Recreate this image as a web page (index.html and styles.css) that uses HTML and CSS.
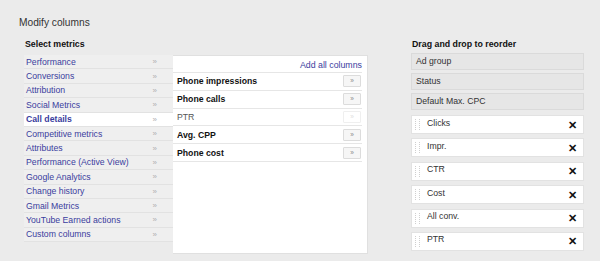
FILE: index.html
```html
<!DOCTYPE html>
<html lang="en">
<head>
    <meta charset="UTF-8">
    <meta name="viewport" content="width=device-width, initial-scale=1.0">
    <title>Modify columns</title>
    <link rel="stylesheet" href="styles.css">
</head>
<body>
    <div class="page">
        <h1>Modify columns</h1>
        <div class="columns">
            <div class="metrics">
                <h2>Select metrics</h2>
                <ul class="metric-list">
                    <li><a href="#">Performance</a><span class="arrow">&raquo;</span></li>
                    <li><a href="#">Conversions</a><span class="arrow">&raquo;</span></li>
                    <li><a href="#">Attribution</a><span class="arrow">&raquo;</span></li>
                    <li><a href="#">Social Metrics</a><span class="arrow">&raquo;</span></li>
                    <li class="active"><a href="#">Call details</a><span class="arrow">&raquo;</span></li>
                    <li><a href="#">Competitive metrics</a><span class="arrow">&raquo;</span></li>
                    <li><a href="#">Attributes</a><span class="arrow">&raquo;</span></li>
                    <li><a href="#">Performance (Active View)</a><span class="arrow">&raquo;</span></li>
                    <li><a href="#">Google Analytics</a><span class="arrow">&raquo;</span></li>
                    <li><a href="#">Change history</a><span class="arrow">&raquo;</span></li>
                    <li><a href="#">Gmail Metrics</a><span class="arrow">&raquo;</span></li>
                    <li><a href="#">YouTube Earned actions</a><span class="arrow">&raquo;</span></li>
                    <li><a href="#">Custom columns</a><span class="arrow">&raquo;</span></li>
                </ul>
            </div>

            <div class="panel">
                <div class="panel-head"><a href="#">Add all columns</a></div>
                <ul class="field-list">
                    <li><span>Phone impressions</span><button>&raquo;</button></li>
                    <li><span>Phone calls</span><button>&raquo;</button></li>
                    <li class="added"><span>PTR</span><button disabled>&raquo;</button></li>
                    <li><span>Avg. CPP</span><button>&raquo;</button></li>
                    <li><span>Phone cost</span><button>&raquo;</button></li>
                </ul>
            </div>

            <div class="order">
                <h2>Drag and drop to reorder</h2>
                <ul class="fixed-list">
                    <li>Ad group</li>
                    <li>Status</li>
                    <li>Default Max. CPC</li>
                </ul>
                <ul class="drag-list">
                    <li><span class="grip"></span><span class="name">Clicks</span><span class="remove">&#x2715;</span></li>
                    <li><span class="grip"></span><span class="name">Impr.</span><span class="remove">&#x2715;</span></li>
                    <li><span class="grip"></span><span class="name">CTR</span><span class="remove">&#x2715;</span></li>
                    <li><span class="grip"></span><span class="name">Cost</span><span class="remove">&#x2715;</span></li>
                    <li><span class="grip"></span><span class="name">All conv.</span><span class="remove">&#x2715;</span></li>
                    <li><span class="grip"></span><span class="name">PTR</span><span class="remove">&#x2715;</span></li>
                </ul>
            </div>
        </div>
    </div>
</body>
</html>
```

FILE: styles.css
```css
body {
    margin: 0;
    background-color: #ebebeb;
    font-family: "Liberation Sans", Arial, sans-serif;
    color: #222;
}
ul {
    list-style: none;
    margin: 0;
    padding: 0;
}
a {
    color: #3a3d9e;
    text-decoration: none;
}
.page {
    padding: 17px 0 0 19px;
}
h1 {
    margin: 0;
    font-size: 10.2px;
    line-height: 12px;
    font-weight: normal;
    color: #333;
}
.columns {
    display: flex;
    margin-top: 8.5px;
    margin-left: 5px;
}
h2 {
    margin: 0;
    font-size: 8.8px;
    line-height: 12px;
    font-weight: bold;
    color: #111;
}

/* left: metric groups */
.metrics {
    width: 149px;
}
.metrics h2 {
    padding-left: 1px;
}
.metric-list {
    margin-top: 5.5px;
}
.metric-list li {
    display: flex;
    justify-content: space-between;
    align-items: center;
    height: 13.4px;
    padding: 0 16px 0 2px;
    background-color: #efefef;
    border-bottom: 1px solid #e2e2e2;
    font-size: 8.7px;
}
.metric-list li.active {
    background-color: #fff;
}
.metric-list li.active a {
    font-weight: bold;
}
.arrow {
    color: #b0b0b0;
    font-size: 8px;
}

/* middle: fields of a group */
.panel {
    width: 194px;
    height: 197px;
    margin-top: 17.5px;
    background-color: #fff;
    border: 1px solid #e0e0e0;
    border-left: none;
}
.panel-head {
    height: 16px;
    padding-right: 5px;
    text-align: right;
    font-size: 8.8px;
    line-height: 19px;
}
.field-list {
    margin-right: 5px;
    border-top: 1px solid #e6e6e6;
}
.field-list li {
    display: flex;
    justify-content: space-between;
    align-items: center;
    height: 16.8px;
    padding: 0 1px 0 4px;
    border-bottom: 1px solid #e6e6e6;
    font-size: 8.7px;
    font-weight: bold;
    color: #111;
}
.field-list li.added {
    font-weight: normal;
    color: #555;
}
.field-list button {
    width: 18px;
    height: 12px;
    padding: 0;
    border: 1px solid #dcdcdc;
    border-radius: 1px;
    background-color: #f6f6f6;
    color: #888;
    font-size: 6.5px;
    line-height: 10px;
    font-family: inherit;
}
.field-list button:disabled {
    border-color: #efefef;
    background-color: #fff;
    color: #ddd;
}

/* right: chosen columns */
.order {
    width: 173px;
    margin-left: 43px;
}
.order h2 {
    padding-left: 1px;
}
.fixed-list {
    margin-top: 3.5px;
}
.fixed-list li {
    height: 15px;
    margin-bottom: 3px;
    padding-left: 4px;
    background-color: #e6e6e6;
    border: 1px solid #dadada;
    font-size: 8.7px;
    line-height: 15px;
    color: #333;
}
.drag-list {
    margin-top: 5px;
}
.drag-list li {
    display: flex;
    align-items: center;
    height: 17px;
    margin-bottom: 4.4px;
    padding: 0 6px 0 3px;
    background-color: #fff;
    border: 1px solid #e2e2e2;
    font-size: 8.7px;
    color: #333;
}
.grip {
    width: 3px;
    height: 11px;
    margin-right: 7px;
    border-left: 1px dotted #cfcfcf;
    border-right: 1px dotted #cfcfcf;
}
.name {
    flex: 1;
    margin-top: -4px;
}
.remove {
    font-size: 10.5px;
    font-weight: bold;
    color: #111;
}
```
